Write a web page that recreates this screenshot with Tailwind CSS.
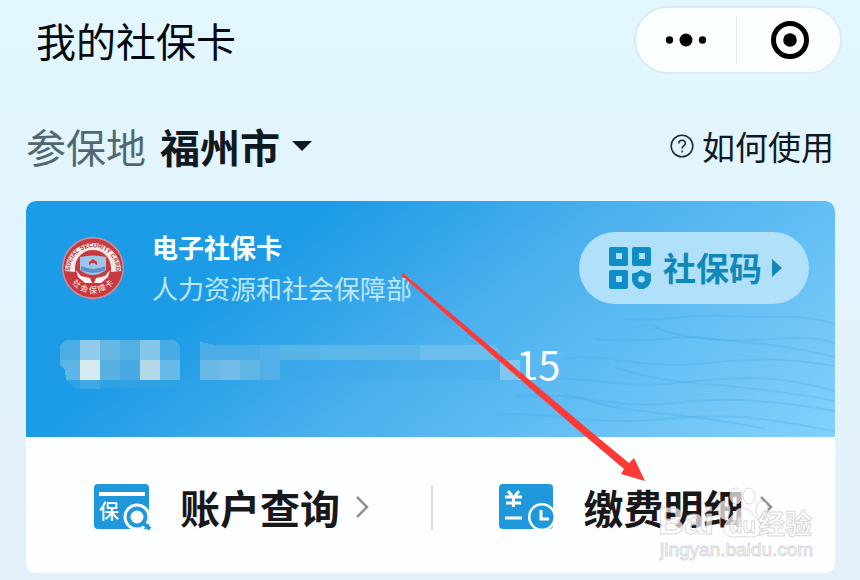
<!DOCTYPE html>
<html lang="zh-CN">
<head>
    <meta charset="UTF-8">
    <meta name="viewport" content="width=device-width, initial-scale=1.0">
    <title>我的社保卡</title>
    <script src="https://cdn.jsdelivr.net/npm/@tailwindcss/browser@4"></script>
</head>
<body class="relative min-h-screen overflow-x-hidden bg-linear-to-b from-[#e2f7ff] via-[#e2f4ff] to-[#e4f0fa] font-['Noto_Sans_CJK_SC',sans-serif] text-[#10191f]">
    <header class="flex items-center justify-between pt-[6px] pr-[18px] pl-[36px]">
        <h1 class="text-[40px] leading-[60px] text-[#06090d]">我的社保卡</h1>
        <div class="flex h-[68px] w-[208px] items-center rounded-full border-2 border-[#dcebf0] bg-[#fafeff]">
            <button type="button" aria-label="更多" class="flex flex-1 justify-center">
                <svg class="h-[14px] w-[42px]" viewBox="0 0 42 14">
                    <circle cx="4.500" cy="7" r="3.700"/>
                    <circle cx="21" cy="7" r="6.500"/>
                    <circle cx="37.500" cy="7" r="3.700"/>
                </svg>
            </button>
            <span class="h-[48px] w-px bg-[#e3edf1]"></span>
            <button type="button" aria-label="关闭" class="flex flex-1 justify-center pl-[4px]">
                <svg class="h-[40px] w-[40px]" viewBox="0 0 40 40">
                    <circle cx="20" cy="20" r="16.500" fill="none" stroke="#000" stroke-width="5"/>
                    <circle cx="20" cy="20" r="6.800"/>
                </svg>
            </button>
        </div>
    </header>

    <main class="px-[26px] pt-[44px]">
        <div class="flex items-center justify-between">
            <button type="button" class="flex items-center text-[40px] leading-[56px]">
                <span class="text-[#526870]">参保地</span>
                <span class="ml-[14px] font-bold">福州市</span>
                <svg class="ml-[12px] h-[10px] w-[20px]" viewBox="0 0 20 10"><path d="M0 0h20L10 10z" fill="#10191f"/></svg>
            </button>
            <a href="#" class="flex items-center text-[33px] leading-[56px]">
                <svg class="mr-[8px] h-[24px] w-[24px]" viewBox="0 0 24 24" fill="none" stroke="#1b2a33" stroke-width="1.500">
                    <circle cx="12" cy="12" r="10.800"/>
                    <path d="M8.800 9.600c0-4.400 6.600-4.200 6.600-.3 0 2.700-3.300 2.600-3.300 5.400M12.100 16.400v2"/>
                </svg>
                如何使用
            </a>
        </div>

        <section class="mt-[27px] -mr-px overflow-hidden rounded-[10px] bg-[#fdfeff]">
            <div class="relative h-[236px] bg-linear-[142deg] from-[#1c9be6] from-28% via-[#49afed] via-52% to-[#83d1fc]">
                <!-- water ripples -->
                <svg class="absolute right-0 bottom-0 h-[150px] w-[360px]" viewBox="0 0 360 150" fill="none" stroke="#3ba3e2" stroke-opacity=".22" stroke-width="2">
                    <path d="M150 32c40 4 60-6 100-3s70-4 110 8"/>
                    <path d="M120 52c50 6 80-6 120 0s80-8 120 4"/>
                    <path d="M90 72c40-8 70 10 130 5s80-8 140 2"/>
                    <path d="M60 92c50-4 80 10 140 4s100-10 160 8"/>
                    <path d="M40 110c60-8 100 14 160 6s110 0 160 8"/>
                    <path d="M20 128c60-4 100 12 170 4s110 2 170 12"/>
                    <path d="M180 40c40 18 90 8 180 30M140 80c50 20 120 14 220 34M90 106c60 24 110 16 200 36"/>
                </svg>
                <div class="relative flex items-start justify-between pt-[31px] pr-[26px] pl-[36px]">
                    <div class="flex h-[72px] items-center">
                        <svg class="h-[64px] w-[62px]" viewBox="0 0 62 62">
                            <defs>
                                <path id="arcTop" d="M8.500 38A23 23 0 1 1 53.500 38"/>
                                <path id="arcBottom" d="M8 43A27 27 0 0 0 54 43"/>
                            </defs>
                            <circle cx="31" cy="31" r="31" fill="#d58a99"/>
                            <circle cx="31" cy="31" r="29.500" fill="#c43b40"/>
                            <path d="M3 34a28 28 0 1 1 56 0l-10 1a18 18 0 1 0-36 0z" fill="#fbe9e6"/>
                            <circle cx="31" cy="31" r="18" fill="#c9383d"/>
                            <path d="M18 20q13-3 26 0v13q-13 10-26 0z" fill="#9fc5e8"/>
                            <path d="M19 29q12 6 24 0v4q-12 6-24 0z" fill="#5d91cb"/>
                            <path d="M27 28v-3l4-3 4 3v3l-3-2h-2z" fill="#c9383d"/>
                            <path d="M14 33l5 6 9 2 2 5h-7l-7-6zM48 33l-5 6-9 2-2 5h7l7-6z" fill="#fff3f0"/>
                            <text font-family="Liberation Sans" font-size="6" font-weight="700" fill="#a83238"><textPath href="#arcTop" startOffset="50%" text-anchor="middle">SOCIAL SECURITY CARD</textPath></text>
                            <text font-family="Noto Sans CJK SC" font-size="8" font-weight="500" fill="#f7d5d0"><textPath href="#arcBottom" startOffset="50%" text-anchor="middle">社 会 保 障 卡</textPath></text>
                        </svg>
                        <div class="ml-[28px]">
                            <h2 class="text-[26px] leading-[40px] font-bold text-white">电子社保卡</h2>
                            <p class="text-[26px] leading-[42px] text-[#bde6fb]">人力资源和社会保障部</p>
                        </div>
                    </div>
                    <button type="button" class="flex h-[72px] w-[230px] items-center rounded-full bg-[#b1e0fa] pl-[30px] text-[33px] font-bold text-[#0f88b8]">
                        <svg class="h-[42px] w-[42px]" viewBox="0 0 42 42" fill="#0f8dc6">
                            <path fill-rule="evenodd" d="M2 0h15q2 0 2 2v15q0 2-2 2H2q-2 0-2-2V2q0-2 2-2zm5 6v6h6V6zM25 0h15q2 0 2 2v15q0 2-2 2H25q-2 0-2-2V2q0-2 2-2zm5 6v6h6V6zM2 23h15q2 0 2 2v15q0 2-2 2H2q-2 0-2-2V25q0-2 2-2zm5 6v6h6v-6z"/>
                            <path fill-rule="evenodd" d="M32.500 22.500q4 3.500 9.500 4v6q0 7-9.500 10.500Q23 39.500 23 32.500v-6q5.500-.5 9.500-4zm0 6.500a3.300 3.300 0 1 0 0 6.600 3.300 3.300 0 0 0 0-6.600z"/>
                        </svg>
                        <span class="ml-[12px]">社保码</span>
                        <svg class="ml-[10px] h-[18px] w-[10px]" viewBox="0 0 10 18"><path d="M0 0l10 9-10 9z" fill="#0f88b8"/></svg>
                    </button>
                </div>
                <!-- card number, mostly pixelated -->
                <div class="relative flex items-start pt-[34px] pl-[34px]">
                    <svg class="h-[60px] w-[460px]" viewBox="0 0 460 60" shape-rendering="crispEdges">
                        <path d="M5 2h15v20H0V7z" fill="#4aade4"/>
                        <path d="M0 22h20v20H6L5 31l-5-4z" fill="#5cb5e6"/>
                        <path d="M20 2h20v20H20z" fill="#90cbea"/>
                        <path d="M20 22h20v20H20z" fill="#d4eaee"/>
                        <path d="M40 2h20v20H40z" fill="#65b8e3"/>
                        <path d="M40 22h20v20H40z" fill="#59b0e2"/>
                        <path d="M60 2h20v20H60z" fill="#53b0e2"/>
                        <path d="M60 22h20v20H60z" fill="#48aae4"/>
                        <path d="M80 2h20v20H80z" fill="#84c6e9"/>
                        <path d="M80 22h20v20H80z" fill="#b5d8e6"/>
                        <path d="M100 2h15l5 6v14h-20z" fill="#48abe5"/>
                        <path d="M100 22h20v20h-20z" fill="#66bae8"/>
                        <path d="M6 42h114l-10 8H14z" fill="#2fa2e3"/>
                        <path d="M20 42h20v9H20z" fill="#3da8e5"/>
                        <path d="M140 4l15 3h45v15h-60z" fill="#4aade5"/>
                        <path d="M140 22h20v20h-20z" fill="#68b9e6"/>
                        <path d="M160 22h20v20h-20z" fill="#72bde8"/>
                        <path d="M180 22h20v20h-20z" fill="#60b7e5"/>
                        <path d="M200 7h20v35h-20z" fill="#52afe7"/>
                        <path d="M220 7h40v15h-40z" fill="#58b3e6"/>
                        <path d="M260 7h100v15H260z" fill="#5bb7ea"/>
                        <path d="M360 7h74l6 5v10h-80z" fill="#6abdec"/>
                        <path d="M220 22h220v20H220z" fill="#3aa6e9" fill-opacity=".25"/>
                        <path d="M440 22h20v20h-20z" fill="#80c9ee"/>
                    </svg>
                    <span class="-ml-[4px] text-[40px] leading-[50px] text-white">15</span>
                </div>
            </div>

            <nav class="grid grid-cols-2 pt-[42px] pb-[38px]">
                <a href="#" class="flex items-center pl-[68px] text-[40px] leading-[56px] font-bold text-[#18171a]">
                    <svg class="h-[48px] w-[58px]" viewBox="0 0 58 48">
                        <rect y="1" width="55" height="45" rx="4" fill="#1e98da"/>
                        <path d="M5 9h46v4H5z" fill="#fff"/>
                        <text x="5" y="36" font-family="Noto Sans CJK SC" font-size="20" font-weight="500" fill="#fff">保</text>
                        <circle cx="43" cy="34" r="13.500" fill="#fdfeff"/>
                        <circle cx="43" cy="34" r="8.500" fill="none" stroke="#1e98da" stroke-width="4"/>
                        <path d="M49 40l7 6" stroke="#1e98da" stroke-width="4"/>
                    </svg>
                    <span class="ml-[28px]">账户查询</span>
                    <svg class="ml-[16px] h-[22px] w-[13px]" viewBox="0 0 13 22" fill="none" stroke="#8f9294" stroke-width="2.500"><path d="M1 1l10 10L1 21"/></svg>
                </a>
                <a href="#" class="relative flex items-center pl-[67px] text-[40px] leading-[56px] font-bold text-[#18171a] before:absolute before:left-0 before:h-[45px] before:w-[2px] before:bg-[#d9dcdd]">
                    <svg class="h-[48px] w-[58px]" viewBox="0 0 58 48">
                        <rect x="1" y="1" width="54" height="45" rx="4" fill="#1e98da"/>
                        <path d="M10 8l4 5M21 8l-4 5M7 14h17M8 20h15M15.500 13v11M7 35h17" fill="none" stroke="#fff" stroke-width="3"/>
                        <circle cx="44" cy="34" r="14" fill="#fdfeff"/>
                        <circle cx="44" cy="34" r="11.500" fill="#1e98da"/>
                        <path d="M43 27v9h8" fill="none" stroke="#fff" stroke-width="3"/>
                    </svg>
                    <span class="ml-[28px]">缴费明细</span>
                    <svg class="ml-[16px] h-[22px] w-[13px]" viewBox="0 0 13 22" fill="none" stroke="#8f9294" stroke-width="2.500"><path d="M1 1l10 10L1 21"/></svg>
                </a>
            </nav>
        </section>
    </main>

    <!-- watermark -->
    <svg class="pointer-events-none absolute top-[484px] left-[656px] h-[80px] w-[164px]" viewBox="0 0 164 80" fill="#fff" fill-opacity=".7" stroke="#c9c9c9" stroke-opacity=".7" stroke-width="1">
        <text x="2" y="50" font-family="Liberation Sans" font-size="36" font-weight="700">Bai</text>
        <ellipse cx="68" cy="26" rx="6" ry="9"/>
        <ellipse cx="80" cy="12" rx="6" ry="8"/>
        <ellipse cx="93" cy="12" rx="6" ry="8"/>
        <ellipse cx="106" cy="26" rx="6" ry="9"/>
        <path d="M87 24c8 0 10 8 15 12 7 7 4 17-6 17-6 0-12-1-18 0-11 0-13-10-6-17 6-5 7-12 15-12z"/>
        <text x="73" y="49" font-family="Liberation Sans" font-size="22" font-weight="700">du</text>
        <text x="102" y="50" font-family="Noto Sans CJK SC" font-size="27" font-weight="700">经验</text>
        <text x="4" y="72" font-family="Liberation Sans" font-size="19" fill-opacity=".9">jingyan.baidu.com</text>
    </svg>

    <!-- pointer arrow -->
    <svg class="pointer-events-none absolute top-[270px] left-[400px] h-[215px] w-[250px]" viewBox="400 270 250 215" fill="#fd3a36">
        <path d="M401 275L403 273L589 430L629 463L634 458L645 481L621 474L624 469L578 430Z"/>
    </svg>
</body>
</html>
